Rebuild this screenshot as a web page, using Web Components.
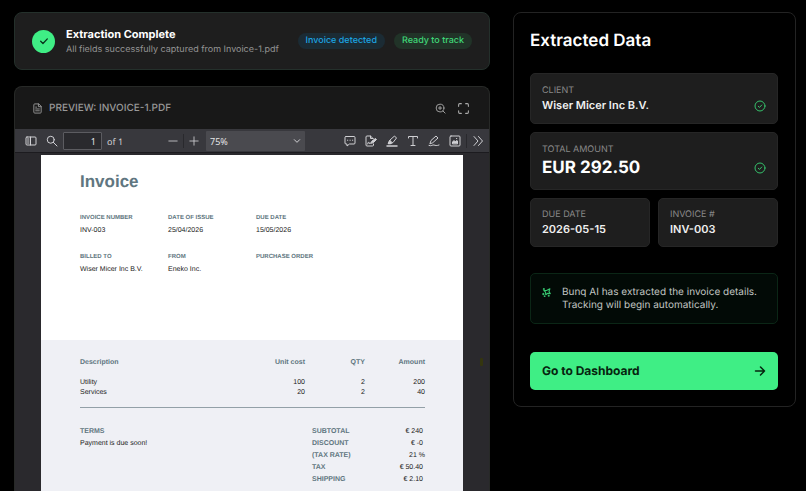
<!DOCTYPE html>
<html lang="en">
<head>
<meta charset="utf-8">
<meta name="viewport" content="width=device-width, initial-scale=1">
<title>Extraction Complete</title>
<style>
  html, body {
    height: 100%;
  }

  body {
    background: #000;
    color: #fff;
    font-family: Inter, "Liberation Sans", sans-serif;
    margin: 0;
    overflow: hidden;
    text-rendering: geometricPrecision;
  }
</style>
</head>
<body>
<extraction-view>
  <status-banner slot="main" heading="Extraction Complete">
    All fields successfully captured from Invoice-1.pdf
    <status-pill slot="pills" tone="blue">Invoice detected</status-pill>
    <status-pill slot="pills" tone="green">Ready to track</status-pill>
  </status-banner>
  <pdf-preview slot="main" heading="PREVIEW: INVOICE-1.PDF">
    <pdf-toolbar slot="toolbar"></pdf-toolbar>
    <invoice-page></invoice-page>
  </pdf-preview>
  <extracted-panel slot="side">
    <data-field label="CLIENT" verified>Wiser Micer Inc B.V.</data-field>
    <data-field label="TOTAL AMOUNT" size="large" verified>EUR 292.50</data-field>
    <data-field label="DUE DATE" half>2026-05-15</data-field>
    <data-field label="INVOICE #" half>INV-003</data-field>
    <ai-note slot="note">Bunq AI has extracted the invoice details. Tracking will begin automatically.</ai-note>
    <action-button slot="action">Go to Dashboard</action-button>
  </extracted-panel>
</extraction-view>

<script>
// Icon drawings, all on a 24 x 24 grid
const ICONS = {
  check: '<path d="M4 12.5l5.5 5.5L20 7"/>',
  file: '<path d="M14 2H6a2 2 0 0 0-2 2v16a2 2 0 0 0 2 2h12a2 2 0 0 0 2-2V8z"/><path d="M14 2v6h6M8 9h2M8 13h8M8 17h8"/>',
  zoomIn: '<circle cx="11" cy="11" r="8.5"/><path d="M17.5 17.5L22 22M11 7.5v7M7.5 11h7"/>',
  expand: '<path d="M8 3H5a2 2 0 0 0-2 2v3M16 3h3a2 2 0 0 1 2 2v3M8 21H5a2 2 0 0 1-2-2v-3M16 21h3a2 2 0 0 0 2-2v-3"/>',
  verified: '<circle cx="12" cy="12" r="10"/><path d="M8.5 12.5l2.5 2.3 4.5-4.8"/>',
  arrow: '<path d="M3 12h18M13 4l8 8-8 8"/>',
  sparkles: '<path d="M21 2l-2.500 7.500L22 15l-6.500-1L10 18l-.5-7L5 7l7-.5z"/><path d="M5 1v3M3.500 2.500h3M3.500 14v4M1.500 16h4M7 21v2M6 22h2M18 19v3M16.500 20.500h3"/>',
  sidebar: '<rect x="2" y="4" width="20" height="16" rx="2"/><path d="M11 4v16M5 8h3M5 12h3M5 16h3"/>',
  search: '<circle cx="9.500" cy="9.500" r="7"/><path d="M14.500 14.500L22 22"/>',
  minus: '<path d="M2 12h20"/>',
  plus: '<path d="M2 12h20M12 2v20"/>',
  chevron: '<path d="M4 8l8 8 8-8"/>',
  comment: '<path d="M4 3h16a2 2 0 0 1 2 2v11a2 2 0 0 1-2 2h-9l-5 4v-4H4a2 2 0 0 1-2-2V5a2 2 0 0 1 2-2z"/><path d="M7 10.500h.5M12 10.500h.5M17 10.500h.5"/>',
  sign: '<path d="M17 18v2a2 2 0 0 1-2 2H4a2 2 0 0 1-2-2V4a2 2 0 0 1 2-2h7l5 5M11 2v5h5"/><path d="M5 18c2-5 3-5 3-2s1 0 3 0"/><path d="M12 16l2-4 7-5 2 2-6 6z" fill="currentColor"/>',
  highlight: '<path d="M2 22h20" stroke-width="3"/><path d="M5 17l3-7L17 2l4 4-7 9-4 2z"/><path d="M8 11l4 4-2 2H5z" fill="currentColor"/>',
  text: '<path d="M3 6V3h18v3M12 3v18M8 21h8"/>',
  draw: '<path d="M4 17l2-6L16 2l4 4-10 9z"/><path d="M2 21c5 2 7-2 10-1s5 2 10 0"/>',
  image: '<rect x="2" y="2" width="20" height="20" rx="2"/><path d="M7 17v-3l3-3 2 3 4-3 1 1v5z" fill="currentColor"/><path d="M15 7h.5"/>',
  more: '<path d="M4 3l8 9-8 9M13 3l8 9-8 9"/>'
};

// <ui-icon name="..." size="..." weight="...">
class UiIcon extends HTMLElement {
  constructor() {
    super();
    this.attachShadow({ mode: 'open' });
  }

  connectedCallback() {
    const size = this.getAttribute('size') || 12;
    const weight = this.getAttribute('weight') || 2;
    this.shadowRoot.innerHTML = `
      <style>
        :host { display: block; flex: none; }
        svg { display: block; fill: none; stroke: currentColor; stroke-linecap: round; stroke-linejoin: round; }
      </style>
      <svg width="${size}" height="${size}" viewBox="0 0 24 24" stroke-width="${weight}" aria-hidden="true">${ICONS[this.getAttribute('name')]}</svg>
    `;
  }
}
customElements.define('ui-icon', UiIcon);

// Two columns: banner and preview on the left, extracted data on the right
class ExtractionView extends HTMLElement {
  constructor() {
    super();
    this.attachShadow({ mode: 'open' }).innerHTML = `
      <style>
        :host {
          box-sizing: border-box;
          display: grid;
          gap: 23px;
          grid-template-columns: minmax(0, 476fr) minmax(0, 283fr);
          height: 100vh;
          padding: 12px 10px 0 14px;
        }
        main { display: flex; flex-direction: column; gap: 16px; min-height: 0; }
      </style>
      <main><slot name="main"></slot></main>
      <aside><slot name="side"></slot></aside>
    `;
  }
}
customElements.define('extraction-view', ExtractionView);

class StatusBanner extends HTMLElement {
  constructor() {
    super();
    this.attachShadow({ mode: 'open' }).innerHTML = `
      <style>
        :host {
          align-items: center;
          background: #1e1e1e;
          border: 1px solid #24302b;
          border-radius: 8px;
          display: flex;
          gap: 11px;
          padding: 11px 17px;
        }
        .badge {
          align-items: center;
          background: #3fee85;
          border-radius: 50%;
          color: #07301a;
          display: flex;
          flex: none;
          height: 23px;
          justify-content: center;
          width: 23px;
        }
        .text { flex: 1; min-width: 0; padding: 1px 0 2px; }
        h1 { font-size: 11px; font-weight: 700; line-height: 18px; margin: 0; }
        p { color: #949494; font-size: 9px; line-height: 13px; margin: 0; white-space: nowrap; }
        .pills { display: flex; gap: 9px; }
      </style>
      <div class="badge"><ui-icon name="check" size="10" weight="3"></ui-icon></div>
      <div class="text"><h1></h1><p><slot></slot></p></div>
      <div class="pills"><slot name="pills"></slot></div>
    `;
  }

  connectedCallback() {
    this.shadowRoot.querySelector('h1').textContent = this.getAttribute('heading');
  }
}
customElements.define('status-banner', StatusBanner);

class StatusPill extends HTMLElement {
  constructor() {
    super();
    this.attachShadow({ mode: 'open' }).innerHTML = `
      <style>
        :host {
          border-radius: 9px;
          display: block;
          font-size: 9px;
          font-weight: 500;
          line-height: 16px;
          padding: 0 8px;
          white-space: nowrap;
        }
        :host([tone="blue"]) { background: #1b2b34; color: #1ba4e2; }
        :host([tone="green"]) { background: #213328; color: #40d878; }
      </style>
      <slot></slot>
    `;
  }
}
customElements.define('status-pill', StatusPill);

class PdfPreview extends HTMLElement {
  constructor() {
    super();
    this.attachShadow({ mode: 'open' }).innerHTML = `
      <style>
        :host {
          background: #181818;
          border: 1px solid #272927;
          border-bottom: 0;
          border-radius: 8px 8px 0 0;
          display: flex;
          flex: 1;
          flex-direction: column;
          min-height: 0;
          overflow: hidden;
          position: relative;
        }
        header {
          align-items: center;
          color: #999;
          display: flex;
          gap: 6px;
          padding: 12px 19px 12px 17px;
        }
        h2 { flex: 1; font-size: 10px; font-weight: 500; line-height: 18px; margin: 0; }
        button { background: none; border: 0; color: #aaa; padding: 0; }
        button + button { margin-left: 5px; }
        .pages {
          background: #2a292d;
          flex: 1;
          min-height: 0;
          overflow: hidden;
          padding: 2px 26px 0;
        }
        .marker {
          background: #34350f;
          border-radius: 1px;
          height: 8px;
          position: absolute;
          right: 6px;
          top: 271px;
          width: 3px;
        }
      </style>
      <header>
        <ui-icon name="file" size="11"></ui-icon>
        <h2></h2>
        <button aria-label="Zoom in"><ui-icon name="zoomIn" size="11"></ui-icon></button>
        <button aria-label="Full screen"><ui-icon name="expand" size="13"></ui-icon></button>
      </header>
      <slot name="toolbar"></slot>
      <div class="pages"><slot></slot></div>
      <span class="marker"></span>
    `;
  }

  connectedCallback() {
    this.shadowRoot.querySelector('h2').textContent = this.getAttribute('heading');
  }
}
customElements.define('pdf-preview', PdfPreview);

class PdfToolbar extends HTMLElement {
  constructor() {
    super();
    const tools = [
      ['comment', 'Comment'], ['sign', 'Signature'], ['highlight', 'Highlight'],
      ['text', 'Text'], ['draw', 'Draw'], ['image', 'Image']
    ];
    this.attachShadow({ mode: 'open' }).innerHTML = `
      <style>
        :host {
          background: #38383d;
          border-bottom: 1px solid #1c1b1f;
          color: #d0d0d4;
          display: flex;
          font-family: "Noto Sans", sans-serif;
          font-size: 9px;
          padding: 2px 5px 1px 10px;
        }
        div { align-items: center; display: flex; }
        .left { gap: 9px; }
        .find, .page, .zoom, .right { gap: 5px; }
        .zoom { margin-left: 45px; }
        .tools { gap: 9px; }
        .right { margin-left: auto; }
        button { background: none; border: 0; color: inherit; padding: 0; }
        input, select {
          appearance: none;
          border-radius: 1px;
          box-sizing: border-box;
          color: #e4e4e6;
          font: inherit;
          margin: 0;
        }
        input {
          background: #2a2a2e;
          border: 1px solid #5c5c61;
          height: 18px;
          padding: 0 5px;
          text-align: right;
          width: 39px;
        }
        .pick { margin-left: 2px; position: relative; }
        select { background: #4a4a4f; border: 0; height: 20px; padding: 0 4px; width: 99px; }
        .pick ui-icon { pointer-events: none; position: absolute; right: 4px; }
        .sep { background: #29292d; height: 14px; width: 1px; }
      </style>
      <div class="left">
        <button aria-label="Toggle sidebar"><ui-icon name="sidebar" size="12"></ui-icon></button>
        <div class="find">
          <button aria-label="Find"><ui-icon name="search" size="12"></ui-icon></button>
          <div class="page">
            <input id="page" value="1" aria-label="Page">
            <label for="page">of 1</label>
          </div>
        </div>
      </div>
      <div class="zoom">
        <button aria-label="Zoom out"><ui-icon name="minus" size="10"></ui-icon></button>
        <span class="sep"></span>
        <button aria-label="Zoom in"><ui-icon name="plus" size="10"></ui-icon></button>
        <div class="pick">
          <select aria-label="Zoom"><option>75%</option></select>
          <ui-icon name="chevron" size="8" weight="3"></ui-icon>
        </div>
      </div>
      <div class="right">
        <div class="tools">
          ${tools.map(([icon, label]) => `<button aria-label="${label}"><ui-icon name="${icon}" size="12"></ui-icon></button>`).join('')}
        </div>
        <span class="sep"></span>
        <button aria-label="More tools"><ui-icon name="more" size="12"></ui-icon></button>
      </div>
    `;
  }
}
customElements.define('pdf-toolbar', PdfToolbar);

class InvoicePage extends HTMLElement {
  constructor() {
    super();
    const details = [
      ['INVOICE NUMBER', 'INV-003'], ['DATE OF ISSUE', '25/04/2026'], ['DUE DATE', '15/05/2026'],
      ['BILLED TO', 'Wiser Micer Inc B.V.'], ['FROM', 'Eneko Inc.'], ['PURCHASE ORDER', '']
    ];
    const items = [['Utility', 100, 2, 200], ['Services', 20, 2, 40]];
    const totals = [
      ['SUBTOTAL', '€ 240'], ['DISCOUNT', '€ -0'], ['(TAX RATE)', '21 %'],
      ['TAX', '€ 50.40'], ['SHIPPING', '€ 2.10']
    ];
    this.attachShadow({ mode: 'open' }).innerHTML = `
      <style>
        :host {
          background: #eff0f5;
          color: #222;
          display: block;
          font-family: "Liberation Sans", Arial, sans-serif;
          font-size: 7px;
          line-height: 10px;
          min-height: 100%;
        }
        h3, dt, th { color: #607680; font-weight: bold; }
        h3, dl, dd, p { margin: 0; }
        .top { background: #fff; height: 185px; }
        .top, .bottom { box-sizing: border-box; padding: 16px 38px 0 39px; }
        .top h3 { font-size: 17px; line-height: 22px; }
        .details {
          display: grid;
          grid-template-columns: 88px 88px 1fr;
          margin-top: 20px;
          row-gap: 13px;
        }
        .details dt { font-size: 6px; line-height: 10px; }
        .details dd { line-height: 16px; min-height: 16px; }
        table { border-bottom: 1px solid #93a0a7; border-collapse: collapse; width: 100%; }
        th, td { padding: 0; text-align: right; width: 60px; }
        th:first-child, td:first-child { text-align: left; width: auto; }
        th { line-height: 12px; padding: 1px 0 9px; }
        tbody tr:last-child td { padding-bottom: 9px; }
        .foot { display: flex; justify-content: space-between; line-height: 12px; margin-top: 18px; }
        .foot h3 { font-size: 7px; }
        .totals { width: 113px; }
        .totals div { display: flex; justify-content: space-between; }
        .totals .money { padding-right: 2px; }
      </style>
      <div class="top">
        <h3>Invoice</h3>
        <dl class="details">
          ${details.map(([name, value]) => `<div><dt>${name}</dt><dd>${value}</dd></div>`).join('')}
        </dl>
      </div>
      <div class="bottom">
        <table>
          <thead><tr><th>Description</th><th>Unit cost</th><th>QTY</th><th>Amount</th></tr></thead>
          <tbody>
            ${items.map(row => `<tr>${row.map(cell => `<td>${cell}</td>`).join('')}</tr>`).join('')}
          </tbody>
        </table>
        <div class="foot">
          <div><h3>TERMS</h3><p>Payment is due soon!</p></div>
          <dl class="totals">
            ${totals.map(([name, value]) => `<div><dt>${name}</dt><dd class="${value.startsWith('€') ? 'money' : ''}">${value}</dd></div>`).join('')}
          </dl>
        </div>
      </div>
    `;
  }
}
customElements.define('invoice-page', InvoicePage);

class ExtractedPanel extends HTMLElement {
  constructor() {
    super();
    this.attachShadow({ mode: 'open' }).innerHTML = `
      <style>
        :host {
          border: 1px solid #232323;
          border-radius: 8px;
          display: block;
          padding: 16px 17px 16px 16px;
        }
        h2 { font-size: 17px; font-weight: 600; line-height: 24px; margin: 0 0 20px; }
        .fields { display: grid; gap: 8px; grid-template-columns: 1fr 1fr; }
        .note { margin: 26px 0 28px; }
      </style>
      <h2>Extracted Data</h2>
      <div class="fields"><slot></slot></div>
      <div class="note"><slot name="note"></slot></div>
      <slot name="action"></slot>
    `;
  }
}
customElements.define('extracted-panel', ExtractedPanel);

class DataField extends HTMLElement {
  constructor() {
    super();
    this.attachShadow({ mode: 'open' }).innerHTML = `
      <style>
        :host {
          background: #1e1e1e;
          border: 1px solid #262626;
          border-radius: 5px;
          display: block;
          grid-column: 1 / -1;
          padding: 11px 11px 9px;
        }
        :host([half]) { grid-column: auto; padding: 10px 11px 8px; }
        .label { color: #898989; font-size: 9px; line-height: 12px; }
        .value {
          align-items: center;
          color: #f0f0f0;
          display: flex;
          font-size: 11px;
          font-weight: 600;
          justify-content: space-between;
          line-height: 17px;
        }
        :host([size="large"]) .value { color: #fff; font-size: 17px; font-weight: 700; line-height: 24px; }
        ui-icon { color: #36c26c; }
      </style>
      <div class="label"></div>
      <div class="value"><slot></slot></div>
    `;
  }

  connectedCallback() {
    this.shadowRoot.querySelector('.label').textContent = this.getAttribute('label');
    if (this.hasAttribute('verified')) {
      const iconEl = document.createElement('ui-icon');
      iconEl.setAttribute('name', 'verified');
      this.shadowRoot.querySelector('.value').append(iconEl);
    }
  }
}
customElements.define('data-field', DataField);

class AiNote extends HTMLElement {
  constructor() {
    super();
    this.attachShadow({ mode: 'open' }).innerHTML = `
      <style>
        :host {
          background: #020a06;
          border: 1px solid #0b2616;
          border-radius: 5px;
          color: #c0c4c1;
          display: flex;
          font-size: 10px;
          gap: 11px;
          line-height: 13px;
          padding: 12px 11px 11px;
        }
        ui-icon { color: #37c870; padding-top: 2px; }
        p { margin: 0; }
      </style>
      <ui-icon name="sparkles" size="9" weight="3"></ui-icon>
      <p><slot></slot></p>
    `;
  }
}
customElements.define('ai-note', AiNote);

class ActionButton extends HTMLElement {
  constructor() {
    super();
    this.attachShadow({ mode: 'open' }).innerHTML = `
      <style>
        :host { display: block; }
        button {
          align-items: center;
          background: #3fee85;
          border: 0;
          border-radius: 5px;
          color: #06240f;
          display: flex;
          font: 700 12px/18px Inter, "Liberation Sans", sans-serif;
          justify-content: space-between;
          padding: 10px 12px;
          text-rendering: inherit;
          width: 100%;
        }
      </style>
      <button><slot></slot><ui-icon name="arrow" size="12" weight="3"></ui-icon></button>
    `;
  }
}
customElements.define('action-button', ActionButton);
</script>
</body>
</html>
